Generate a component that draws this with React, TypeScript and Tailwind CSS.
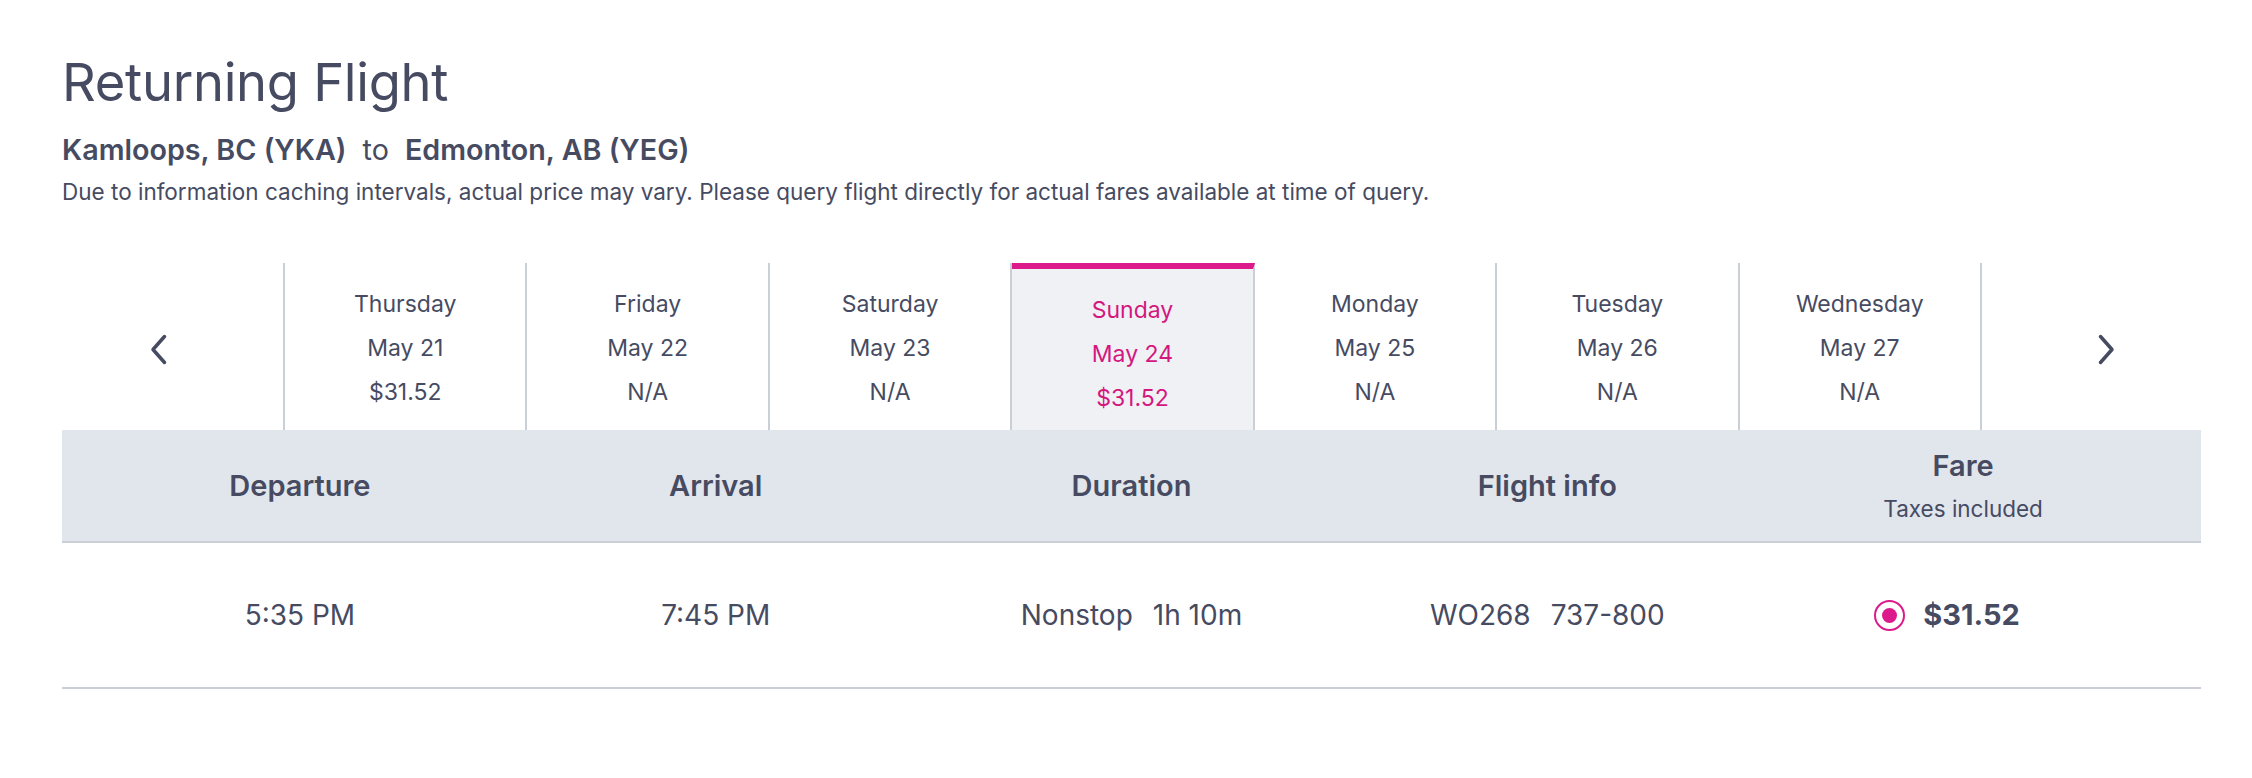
import React from 'react'

const days = [
  { day: 'Thursday', date: 'May 21', price: '$31.52' },
  { day: 'Friday', date: 'May 22', price: 'N/A' },
  { day: 'Saturday', date: 'May 23', price: 'N/A' },
  { day: 'Sunday', date: 'May 24', price: '$31.52', active: true },
  { day: 'Monday', date: 'May 25', price: 'N/A' },
  { day: 'Tuesday', date: 'May 26', price: 'N/A' },
  { day: 'Wednesday', date: 'May 27', price: 'N/A' },
]

function Chevron({ dir }: { dir: 'left' | 'right' }) {
  return (
    <svg width="17" height="31" viewBox="0 0 17 31" fill="none">
      <polyline
        points={dir === 'left' ? '14.5,2.5 3,15.5 14.5,28.5' : '2.5,2.5 14,15.5 2.5,28.5'}
        stroke="#464b62"
        strokeWidth="3.5"
        strokeLinecap="round"
        strokeLinejoin="round"
      />
    </svg>
  )
}

export default function App() {
  return (
    <div className="w-full h-[778px] bg-white text-[#464b62] font-['Inter',sans-serif]">
      <div className="pl-[62px] w-[2201px]">
        {/* Heading */}
        <h1 className="pt-[53px] text-[52.5px] leading-[58px] font-normal tracking-[-0.3px]">Returning Flight</h1>
        <div className="mt-[21px] h-[36px] flex items-center text-[28.7px] gap-[16px]">
          <span className="font-semibold">Kamloops, BC (YKA)</span>
          <span>to</span>
          <span className="font-semibold">Edmonton, AB (YEG)</span>
        </div>
        <p className="mt-[10px] h-[28px] leading-[28px] text-[22.5px]">
          Due to information caching intervals, actual price may vary. Please query flight directly for actual fares available at time of query.
        </p>

        {/* Date carousel */}
        <div className="mt-[57px] h-[167px] flex">
          <button className="w-[221px] flex items-center pl-[88px] pt-[6px]">
            <Chevron dir="left" />
          </button>
          <div className="w-[1699px] flex border-l-2 border-[#c9ced7]">
            {days.map((d) => (
              <div
                key={d.day}
                className={
                  d.active
                    ? 'flex-1 border-r-2 border-[#c9ced7] border-t-[6px] border-t-[#dc1a8c] bg-[#f0f1f5] text-[#d4177f] flex flex-col items-center pt-[19px] text-[23px] leading-[44px]'
                    : 'flex-1 border-r-2 border-[#c9ced7] flex flex-col items-center pt-[19px] text-[23px] leading-[44px]'
                }
              >
                <span>{d.day}</span>
                <span>{d.date}</span>
                <span>{d.price}</span>
              </div>
            ))}
          </div>
          <button className="flex-1 flex items-center pl-[116px] pt-[6px]">
            <Chevron dir="right" />
          </button>
        </div>

        {/* Table header */}
        <div className="h-[113px] bg-[#e1e5ec] border-b-2 border-[#c9ced7] grid grid-cols-5 px-[30px] items-center text-center">
          <div className="text-[29px] font-semibold">Departure</div>
          <div className="text-[29px] font-semibold">Arrival</div>
          <div className="text-[29px] font-semibold">Duration</div>
          <div className="text-[29px] font-semibold">Flight info</div>
          <div className="flex flex-col items-center">
            <span className="text-[29px] leading-[36px] font-semibold">Fare</span>
            <span className="mt-[10px] text-[22.5px] leading-[30px]">Taxes included</span>
          </div>
        </div>

        {/* Flight row */}
        <div className="h-[146px] border-b-2 border-[#c9ced7] grid grid-cols-5 px-[30px] items-center text-center text-[28px]">
          <div>5:35 PM</div>
          <div>7:45 PM</div>
          <div className="flex justify-center gap-[20px]">
            <span>Nonstop</span>
            <span>1h 10m</span>
          </div>
          <div className="flex justify-center gap-[20px]">
            <span>WO268</span>
            <span>737-800</span>
          </div>
          <div className="flex justify-center items-center gap-[18px] pr-[32px]">
            <span className="w-[31px] h-[31px] rounded-full border-2 border-[#dc1a8c] flex items-center justify-center">
              <span className="w-[15px] h-[15px] rounded-full bg-[#dc1a8c]" />
            </span>
            <span className="text-[29px] font-bold">$31.52</span>
          </div>
        </div>
      </div>
    </div>
  )
}
